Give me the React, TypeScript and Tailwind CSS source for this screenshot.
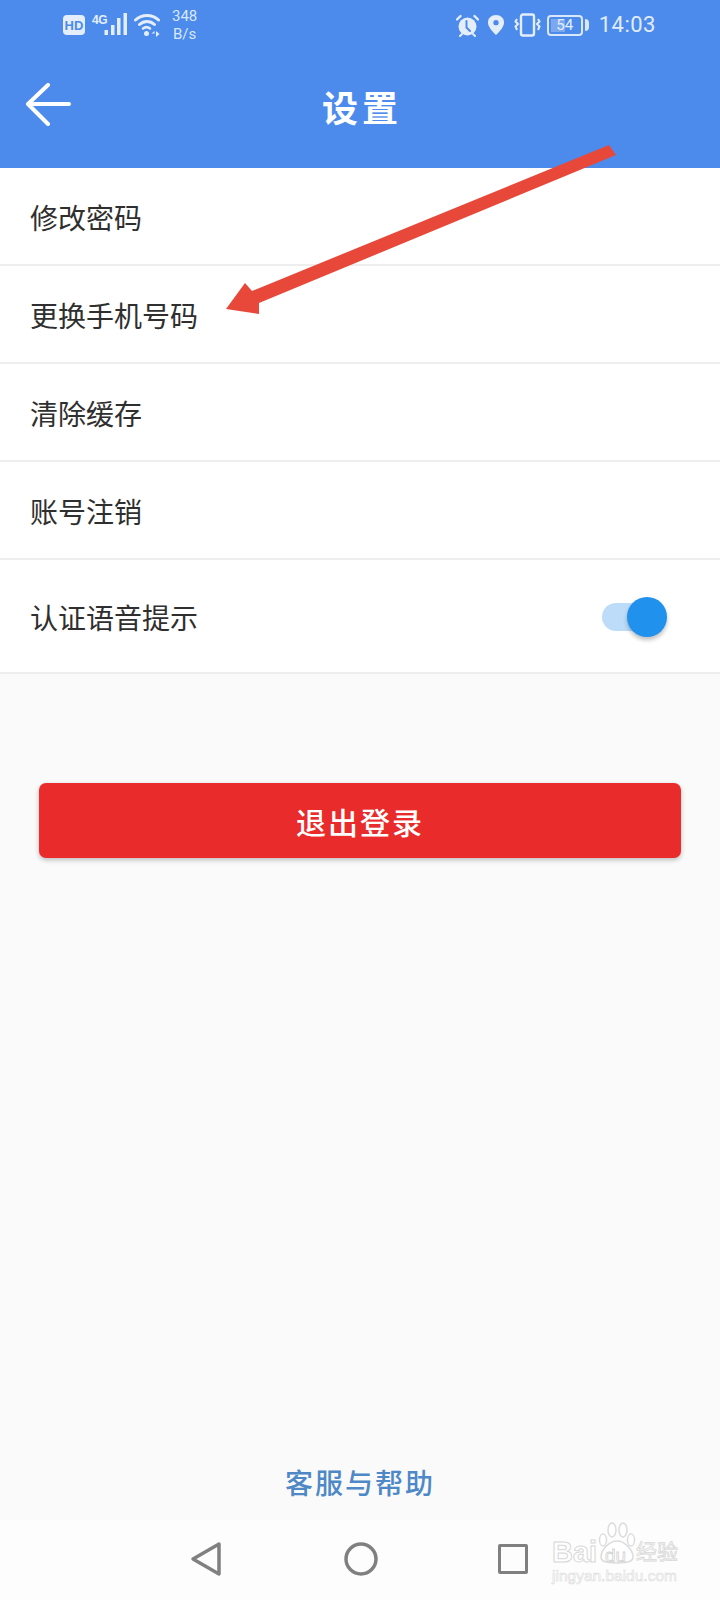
const rows = [
  { label: '修改密码' },
  { label: '更换手机号码' },
  { label: '清除缓存' },
  { label: '账号注销' },
];

function StatusLeft() {
  return (
    <div className="flex items-center">
      <div className="w-[22px] h-[20px] rounded-[4px] bg-[#e4eefb] flex items-center justify-center text-[13px] font-bold text-[#4c8bec] leading-none font-['Liberation_Sans',sans-serif]">
        HD
      </div>
      <div className="relative w-[36px] h-[24px] ml-[7px]">
        <span className="absolute left-0 top-[1px] text-[12px] font-bold leading-none tracking-[-0.5px] text-[#e4eefb] font-['Liberation_Sans',sans-serif]">4G</span>
        <svg className="absolute left-0 top-0" width="36" height="24" viewBox="0 0 36 24" fill="#e4eefb">
          <rect x="12.500" y="17" width="3.500" height="5" />
          <rect x="19" y="12" width="3.500" height="10" />
          <rect x="25" y="5" width="3.500" height="17" />
          <rect x="31.500" y="0" width="3.500" height="22" />
        </svg>
      </div>
      <svg className="ml-[6px]" width="27" height="24" viewBox="0 0 27 24" fill="none" stroke="#e4eefb" strokeLinecap="round">
        <path d="M1.500 7C8 1 18 1 24.500 7" strokeWidth="3" />
        <path d="M5.500 11.500C10 7.500 16 7.500 20.500 11.500" strokeWidth="3" />
        <path d="M9 15.500C11 14 14 14 16 15.500" strokeWidth="2.600" />
        <circle cx="12.500" cy="20.500" r="2.500" fill="#e4eefb" stroke="none" />
        <path d="M20.500 18l-3 2.500h3zM22 18v6l3.500-3z" fill="#e4eefb" stroke="none" />
      </svg>
      <div className="ml-[11px] text-[15px] leading-[18px] text-[#d9e7fa] text-center font-['Roboto',sans-serif]">
        <div>348</div>
        <div>B/s</div>
      </div>
    </div>
  );
}

function StatusRight() {
  return (
    <div className="flex items-center">
      <svg width="23" height="23" viewBox="0 0 23 23" fill="none">
        <circle cx="11.500" cy="12.500" r="9" fill="#e4eefb" />
        <path d="M10.500 7v6.500l3.500 3.500" stroke="#4c8bec" strokeWidth="2" strokeLinecap="round" />
        <path d="M1 5.500l3.500-3.500M22 5.500l-3.500-3.500" stroke="#e4eefb" strokeWidth="2.400" strokeLinecap="round" />
        <path d="M4 22l2-2M19 22l-2-2" stroke="#e4eefb" strokeWidth="2" strokeLinecap="round" />
      </svg>
      <svg className="ml-[8px]" width="18" height="22" viewBox="0 0 19 22">
        <path d="M9.500 0.500C4.500 0.500 1 4 1 8.500C1 14 9.500 21.500 9.500 21.500S18 14 18 8.500C18 4 14.500 0.500 9.500 0.500Z" fill="#e4eefb" />
        <circle cx="9.500" cy="8.500" r="2.800" fill="#4c8bec" />
      </svg>
      <svg className="ml-[9px]" width="27" height="24" viewBox="0 0 27 24" fill="none" stroke="#e4eefb">
        <rect x="7" y="1.500" width="13" height="21" rx="2" strokeWidth="2.400" />
        <path d="M3 6l-1.500 2.500L4 11l-2.500 2.500L3 17" strokeWidth="2" />
        <path d="M24 6l1.500 2.500L23 11l2.500 2.500L24 17" strokeWidth="2" />
      </svg>
      <div className="ml-[6px] flex items-center">
        <div className="relative w-[36px] h-[21px] rounded-[4px] border-2 border-[#d9e7fa] overflow-hidden flex items-center justify-center">
          <div className="absolute left-[2px] top-[2px] bottom-[2px] w-[14px] bg-[#7ba8ef]" />
          <span className="relative text-[15px] leading-none text-[#e4eefb] font-['Roboto',sans-serif]">54</span>
        </div>
        <div className="ml-[2px] w-[4px] h-[12px] rounded-r-sm bg-[#d9e7fa]" />
      </div>
      <span className="ml-[10px] text-[22px] leading-none text-[#e0ecfb] tracking-[0.5px] font-['Roboto',sans-serif]">14:03</span>
    </div>
  );
}

export default function App() {
  return (
    <div className="relative w-[720px] h-[1600px] flex flex-col bg-[#fafafa] overflow-hidden font-['Noto_Sans_CJK_SC',sans-serif]">
      <header className="h-[168px] bg-[#4c8bec] flex flex-col">
        <div className="h-[50px] flex items-center justify-between pl-[63px] pr-[64px]">
          <StatusLeft />
          <StatusRight />
        </div>
        <div className="relative flex-1 flex items-center justify-center">
          <svg className="absolute left-[25px] top-[33px]" width="46" height="44" viewBox="0 0 46 44" fill="none" stroke="#ffffff" strokeWidth="4" strokeLinecap="round" strokeLinejoin="round">
            <path d="M44 21H3M23 2L3 21l20 20" />
          </svg>
          <h1 className="text-[36px] font-bold leading-none tracking-[4px] text-white mt-[-6px] pl-[4px]">设置</h1>
        </div>
      </header>

      <div className="bg-white">
        {rows.map((r) => (
          <div key={r.label} className="h-[98px] flex items-center pl-[30px] pt-[1px] border-b-2 border-[#eeeeee]">
            <span className="text-[28px] leading-none text-[#2f2f2f]">{r.label}</span>
          </div>
        ))}
        <div className="h-[114px] flex items-center justify-between pl-[30px] pr-[53px] pt-[2px] border-b-2 border-[#eeeeee]">
          <span className="text-[28px] leading-none text-[#2f2f2f]">认证语音提示</span>
          <div className="relative w-[65px] h-[40px] flex items-center">
            <div className="w-[58px] h-[28px] rounded-full bg-[#bddcf9]" />
            <div className="absolute right-0 top-0 w-[40px] h-[40px] rounded-full bg-[#2191ee] shadow-[0_3px_4px_rgba(0,0,0,0.25)]" />
          </div>
        </div>
      </div>

      <button className="mt-[109px] mx-[39px] h-[75px] rounded-[7px] bg-[#ea2b2b] shadow-[0_2px_5px_rgba(0,0,0,0.25)] text-white text-[30px] font-medium tracking-[2px] leading-none">
        退出登录
      </button>

      <div className="flex-1 flex items-end justify-center pb-[24px]">
        <span className="text-[28px] leading-none font-medium tracking-[2px] text-[#4f88c6]">客服与帮助</span>
      </div>

      <nav className="h-[80px] bg-[#fdfdfd] flex items-center pb-[2px]">
        <svg className="ml-[190px]" width="32" height="36" viewBox="0 0 32 36" fill="none" stroke="#808080" strokeWidth="3.500" strokeLinejoin="round">
          <path d="M29 3L3 18l26 15z" />
        </svg>
        <svg className="ml-[122px]" width="34" height="34" viewBox="0 0 34 34" fill="none" stroke="#808080" strokeWidth="3.500">
          <circle cx="17" cy="17" r="15" />
        </svg>
        <div className="ml-[120px] w-[30px] h-[30px] rounded-[2px] border-[3.500px] border-[#808080]" />
      </nav>

      {/* red annotation arrow drawn over the list */}
      <svg className="absolute left-0 top-0 pointer-events-none" width="720" height="340" viewBox="0 0 720 340">
        <path d="M609 145L616 155L259 303L259 314L226 309L245 283L252 291Z" fill="#e8483a" />
      </svg>

      {/* baidu jingyan watermark */}
      <div className="absolute left-[552px] top-[1521px] w-[130px] h-[66px] pointer-events-none font-['Liberation_Sans',sans-serif]">
        <svg className="absolute left-[46px] top-0" width="38" height="44" viewBox="0 0 38 44" fill="#ffffff" stroke="#dcdcdc" strokeWidth="1.500">
          <ellipse cx="5" cy="19" rx="3.500" ry="6" />
          <ellipse cx="14" cy="9" rx="4" ry="7" />
          <ellipse cx="25" cy="9" rx="4" ry="7" />
          <ellipse cx="33" cy="19" rx="3.500" ry="6" />
          <path d="M19 20C11 20 3 29 3 36C3 41 9 42 19 42C29 42 35 41 35 36C35 29 27 20 19 20Z" />
        </svg>
        <span className="absolute left-0 top-[17px] text-[29px] font-bold leading-none text-white [-webkit-text-stroke:1px_#d8d8d8]">Bai</span>
        <span className="absolute left-[53px] top-[25px] text-[19px] leading-none text-white [-webkit-text-stroke:0.800px_#d2d2d2]">du</span>
        <span className="absolute left-[84px] top-[19px] text-[21px] leading-none text-white [-webkit-text-stroke:0.800px_#d8d8d8] font-['Noto_Sans_CJK_SC',sans-serif]">经验</span>
        <span className="absolute left-0 top-[47px] text-[15.500px] leading-none text-white [-webkit-text-stroke:0.600px_#dcdcdc]">jingyan.baidu.com</span>
      </div>
    </div>
  );
}
